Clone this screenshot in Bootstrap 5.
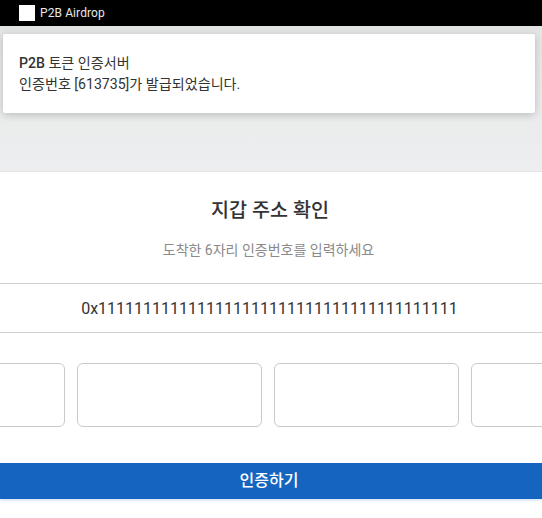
<!DOCTYPE html>
<html lang="ko">
<head>
<meta charset="utf-8">
<title>P2B Airdrop</title>
<link href="https://cdn.jsdelivr.net/npm/bootstrap@5.3.0/dist/css/bootstrap.min.css" rel="stylesheet">
<style>
html,body{height:518px;overflow:hidden;background:#fff;}
body{font-family:Roboto,"Noto Sans CJK KR",sans-serif;color:#333;}
.topbar{height:26px;background:#000;color:#e8e8e8;font-size:12px;letter-spacing:.1px;padding-left:19px;gap:5px;}
.logo-box{width:16px;height:16px;background:#fff;}
.notice-zone{height:146px;background:linear-gradient(#e3e5e5,#e9ebeb 45%,#eceeef);padding:8px 7px 0 3px;border-bottom:1px solid #e4e6e6;}
.notice-box{height:79px;background:#fff;border-radius:2px;padding:19px 16px 0;font-size:14.1px;line-height:21px;color:#333;box-shadow:0 2px 8px rgba(0,0,0,.2);}
.notice-box b{font-weight:500;}
.verify-title{font-size:19.6px;font-weight:500;line-height:26px;padding:26px 2px 0 0;margin:0;color:#333;}
.verify-sub{font-size:14px;line-height:18px;color:#8a8a8a;padding-right:5px;margin:17px 0 0;}
.addr-line{height:50px;margin-top:24px;padding:2px 3px 0 0;border-top:1px solid #cfcfcf;border-bottom:1px solid #cfcfcf;font-size:16px;color:#333;}
.code-row{margin:30px 0 0 -120px;gap:12px;width:776px;}
.code-cell{width:185px;height:64px;flex:none;border:1px solid #cacaca;border-radius:6px;background:#fff;}
.verify-btn{height:36px;margin-top:36px;background:#1565c0;color:#fff;font-size:16px;font-weight:500;border:0;border-radius:0;box-shadow:0 2px 2px #dceaf7;}
.verify-btn:hover{background:#1565c0;color:#fff;}
</style>
</head>
<body>
<div class="topbar d-flex align-items-center">
  <span class="logo-box"></span>
  <span>P2B Airdrop</span>
</div>
<div class="notice-zone">
  <div class="notice-box">
    <div><b>P2B</b> 토큰 인증서버</div>
    <div>인증번호 [613735]가 발급되었습니다.</div>
  </div>
</div>
<div class="text-center">
  <h1 class="verify-title">지갑 주소 확인</h1>
  <p class="verify-sub">도착한 6자리 인증번호를 입력하세요</p>
  <div class="addr-line d-flex align-items-center justify-content-center">0x1111111111111111111111111111111111111111</div>
  <div class="code-row d-flex">
    <div class="code-cell"></div>
    <div class="code-cell"></div>
    <div class="code-cell"></div>
    <div class="code-cell"></div>
  </div>
  <button type="button" class="btn verify-btn w-100 d-flex align-items-center justify-content-center py-0 ps-0 pe-1">인증하기</button>
</div>
<script src="https://cdn.jsdelivr.net/npm/bootstrap@5.3.0/dist/js/bootstrap.bundle.min.js"></script>
</body>
</html>
